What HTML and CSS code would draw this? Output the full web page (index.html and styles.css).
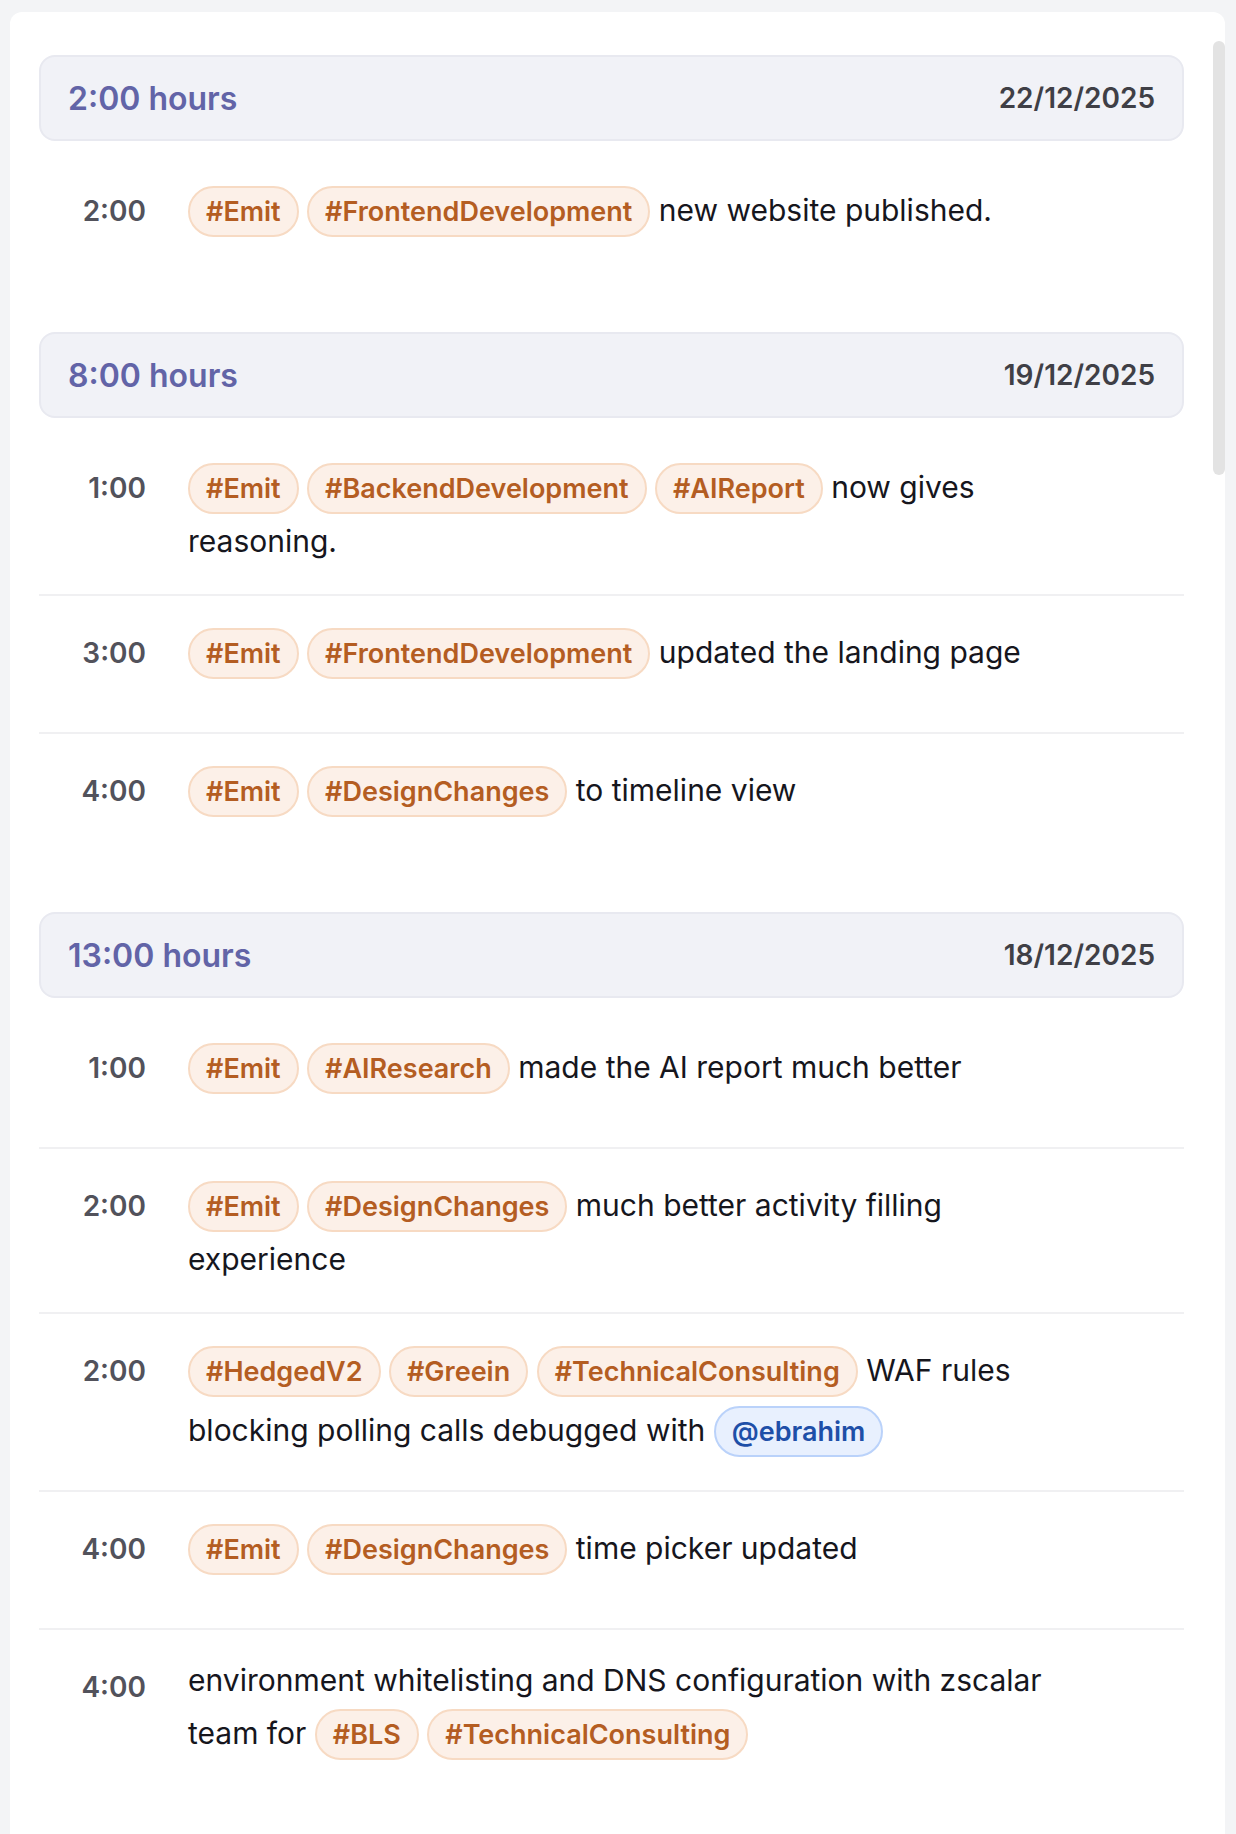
FILE: index.html
```html
<!DOCTYPE html>
<html lang="en">
<head>
<meta charset="utf-8">
<title>Timeline</title>
<link rel="stylesheet" href="styles.css">
</head>
<body>
<div class="card">
  <div class="scroll-thumb"></div>

  <section class="group">
    <header class="group-head"><span class="total">2:00 hours</span><span class="date">22/12/2025</span></header>
    <div class="rows">
      <div class="row">
        <div class="time">2:00</div>
        <div class="entry"><span class="tag">#Emit</span> <span class="tag">#FrontendDevelopment</span> new website published.</div>
      </div>
    </div>
  </section>

  <section class="group">
    <header class="group-head"><span class="total">8:00 hours</span><span class="date">19/12/2025</span></header>
    <div class="rows">
      <div class="row">
        <div class="time">1:00</div>
        <div class="entry"><span class="tag">#Emit</span> <span class="tag">#BackendDevelopment</span> <span class="tag">#AIReport</span> now gives reasoning.</div>
      </div>
      <div class="row">
        <div class="time">3:00</div>
        <div class="entry"><span class="tag">#Emit</span> <span class="tag">#FrontendDevelopment</span> updated the landing page</div>
      </div>
      <div class="row">
        <div class="time">4:00</div>
        <div class="entry"><span class="tag">#Emit</span> <span class="tag">#DesignChanges</span> to timeline view</div>
      </div>
    </div>
  </section>

  <section class="group">
    <header class="group-head"><span class="total">13:00 hours</span><span class="date">18/12/2025</span></header>
    <div class="rows">
      <div class="row">
        <div class="time">1:00</div>
        <div class="entry"><span class="tag">#Emit</span> <span class="tag">#AIResearch</span> made the AI report much better</div>
      </div>
      <div class="row">
        <div class="time">2:00</div>
        <div class="entry"><span class="tag">#Emit</span> <span class="tag">#DesignChanges</span> much better activity filling experience</div>
      </div>
      <div class="row">
        <div class="time">2:00</div>
        <div class="entry"><span class="tag">#HedgedV2</span> <span class="tag">#Greein</span> <span class="tag">#TechnicalConsulting</span> WAF rules blocking polling calls debugged with <span class="mention">@ebrahim</span></div>
      </div>
      <div class="row">
        <div class="time">4:00</div>
        <div class="entry"><span class="tag">#Emit</span> <span class="tag">#DesignChanges</span> time picker updated</div>
      </div>
      <div class="row">
        <div class="time">4:00</div>
        <div class="entry">environment whitelisting and DNS configuration with zscalar team for <span class="tag">#BLS</span> <span class="tag">#TechnicalConsulting</span></div>
      </div>
    </div>
  </section>
</div>
</body>
</html>
```
FILE: styles.css
```css
html, body {
  margin: 0;
  padding: 0;
  background: #f3f4f6;
  font-family: Inter, "Noto Sans", "Liberation Sans", sans-serif;
  color: #16161d;
}

.card {
  position: relative;
  margin: 12px 11px 0 10px;
  height: 1822px;
  overflow: hidden;
  background: #ffffff;
  border-radius: 12px 12px 0 0;
  padding: 43px 41px 0 29px;
  box-sizing: border-box;
}

.scroll-thumb {
  position: absolute;
  right: 0;
  top: 29px;
  width: 12px;
  height: 434px;
  border-radius: 6px;
  background: #e3e3e3;
}

.group {
  margin-bottom: 42px;
}

.group-head {
  display: flex;
  align-items: center;
  justify-content: space-between;
  height: 86px;
  box-sizing: border-box;
  padding: 0 27px 0 27px;
  background: #f1f2f7;
  border: 2px solid #e8e9f0;
  border-radius: 16px;
}

.total {
  font-size: 32px;
  font-weight: 600;
  color: #6264a7;
}

.date {
  font-size: 28px;
  font-weight: 600;
  color: #3f3f46;
}

.rows {
  margin-top: 13px;
}

.row {
  display: flex;
  align-items: flex-start;
  padding: 27px 116px 29px 0;
  border-bottom: 2px solid #f0f0f2;
}

.row:last-child {
  border-bottom: 0;
}

.time {
  flex: 0 0 107px;
  text-align: right;
  margin-right: 42px;
  font-size: 28px;
  font-weight: 600;
  line-height: 60px;
  color: #52525b;
}

.entry {
  flex: 1 1 auto;
  min-height: 80px;
  font-size: 30px;
  line-height: 47px;
  color: #16161d;
}

.tag,
.mention {
  display: inline-block;
  height: 51px;
  box-sizing: border-box;
  margin: 5px 0 4px;
  padding: 0 16px;
  border-radius: 26px;
  font-size: 27px;
  font-weight: 600;
  line-height: 47px;
}

.tag {
  background: #fcf0e8;
  border: 2px solid #f7dac3;
  color: #b45d22;
}

.mention {
  background: #e8f0fe;
  border: 2px solid #bad2fa;
  color: #1e4fa8;
}
```
